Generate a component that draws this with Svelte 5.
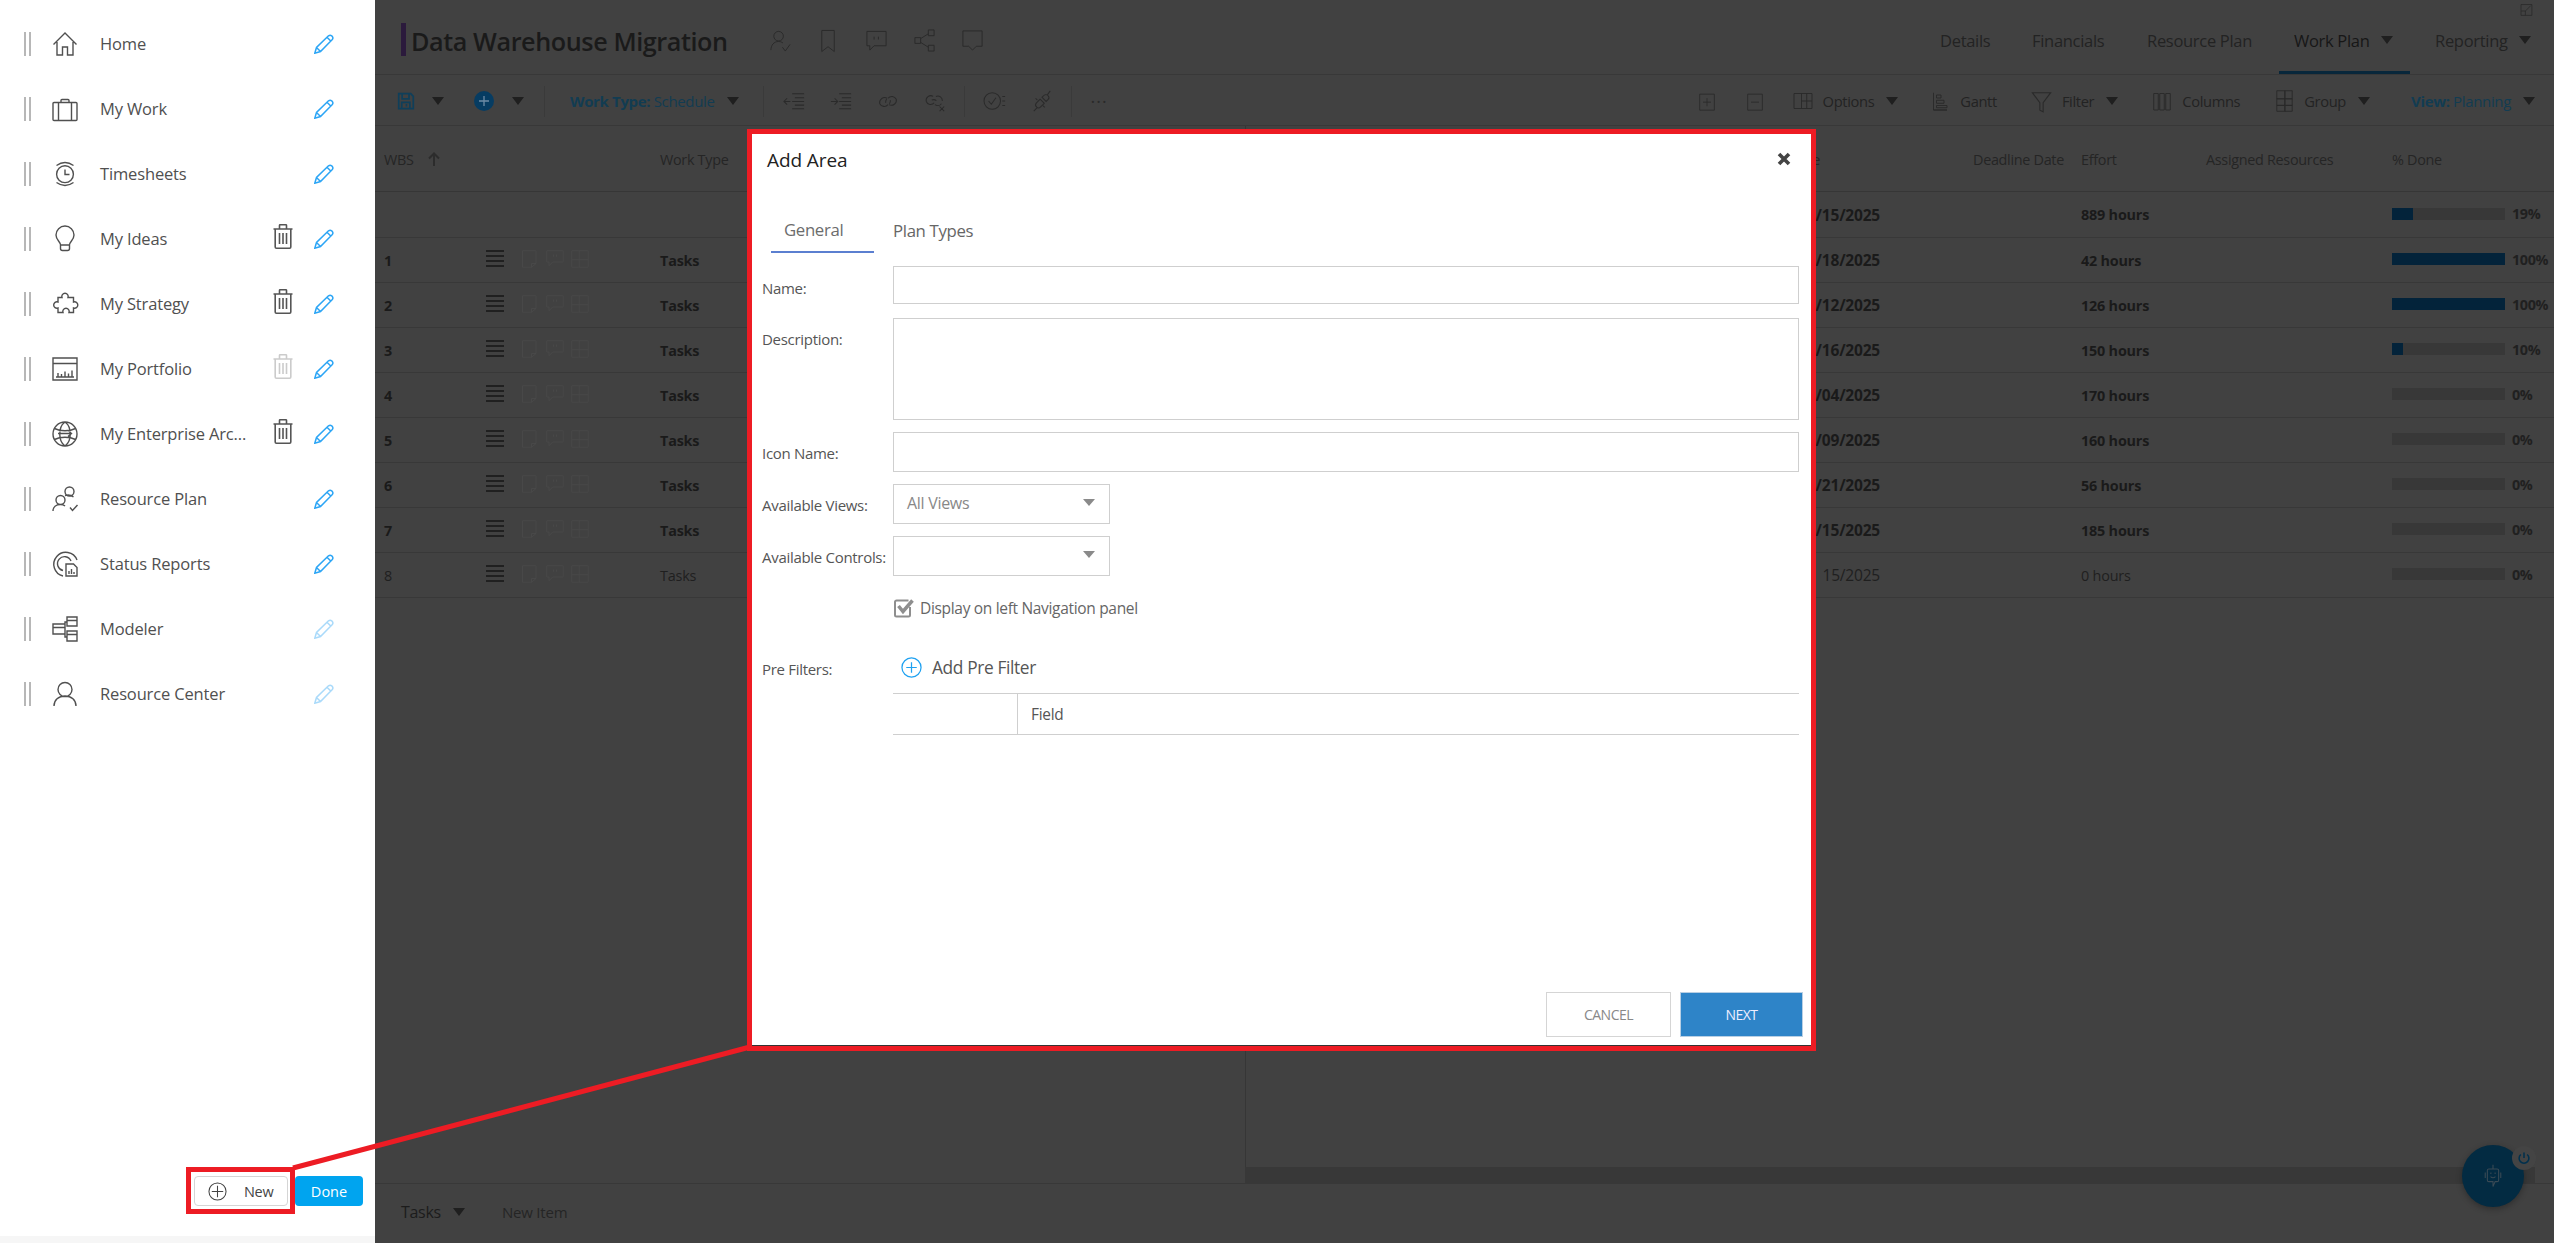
<script>
  const nav = [
    { label: 'Home', icon: 'home', edit: 1 },
    { label: 'My Work', icon: 'work', edit: 1 },
    { label: 'Timesheets', icon: 'time', edit: 1 },
    { label: 'My Ideas', icon: 'bulb', trash: 1, edit: 1 },
    { label: 'My Strategy', icon: 'puzzle', trash: 1, edit: 1 },
    { label: 'My Portfolio', icon: 'portfolio', trash: 0.3, edit: 1 },
    { label: 'My Enterprise Arc...', icon: 'globe', trash: 1, edit: 1 },
    { label: 'Resource Plan', icon: 'people', edit: 1 },
    { label: 'Status Reports', icon: 'status', edit: 1 },
    { label: 'Modeler', icon: 'modeler', edit: 0.4 },
    { label: 'Resource Center', icon: 'person', edit: 0.4 }
  ];
  const I = {
    home: 'M1.5 13.5 13 2l11.5 11.5M5 11v13h5.5v-8h5v8H21V11',
    work: 'M2 6.5h22a1 1 0 0 1 1 1v16a1 1 0 0 1-1 1H2a1 1 0 0 1-1-1v-16a1 1 0 0 1 1-1zM6.5 6.5v18M19.5 6.5v18M9 6.5V4.5a1 1 0 0 1 1-1h6a1 1 0 0 1 1 1v2',
    time: 'M13 4.8a8.4 8.4 0 1 1 0 16.8 8.4 8.4 0 0 1 0-16.8zM13 8.5v5h4.5M4.5 4.5Q13-1.5 21.5 4.5M4.5 21.5Q13 27.500 21.500 21.500',
    bulb: 'M8.500 19c0-3.500-4.500-5-4.500-10a9 9 0 0 1 18 0c0 5-4.500 6.500-4.500 10zM8.500 19v3.500a2 2 0 0 0 2 2h5a2 2 0 0 0 2-2V19',
    puzzle: 'M10 6.500a3.200 3.200 0 1 1 6 0h5.500V11a3.200 3.200 0 1 1 0 6v4.500H17a3.200 3.200 0 1 0-6 0H6v-4.500a3.200 3.200 0 1 1 0-6V6.500z',
    portfolio: 'M1 2h24v22H1zM1 7.500h24M6 20.500v-3.500M9.500 20.500v-2.500M13 20.500v-5M16.500 20.500v-3M20 20.500v-6M4 21h18',
    globe: 'M13 1a12 12 0 1 1 0 24 12 12 0 0 1 0-24zM13 1c-7 5-7 19 0 24M13 1c7 5 7 19 0 24M2.500 7.500c6 3 15 3 21 0M2.500 18.500c6-3 15-3 21 0M6 12.500h13M16 9.500l3.500 3-3.500 3',
    people: 'M17.500 1a4.500 4.500 0 1 1 0 9 4.500 4.500 0 0 1 0-9zM8.500 9.500a4.500 4.500 0 1 1 0 9 4.500 4.500 0 0 1 0-9zM1 25c0-4 3-6.500 7.500-6.500 2 0 3.500.5 4.500 1.500M13 9.500c3-1 6-.5 8.500 1.500M18 21.500l2.500 3 5-5.500',
    status: 'M11 25A12 12 0 1 1 25 9M11 19.500A7 7 0 1 1 19 10M14 13h7.500l3.500 3.500V25H14zM17 23v-3M19.500 23v-5M22 23v-2',
    modeler: 'M15 1h10v9H15zM15 4.500h10M15 15h10v10H15zM15 18.500h10M1 8h12v10H1zM1 11.500h12M15 6h-2v2M13 18v3h2',
    person: 'M13 1.500a7 7 0 1 1 0 14 7 7 0 0 1 0-14zM2 25c0-6 4.500-10 11-10s11 4 11 10',
    save: 'M2 2h14l3 3v14.500H2zM6 2v6h8V2M5.500 19.500V12h9.500v7.500M11 14v3',
    userck: 'M10 2.500a5 5 0 1 1 0 10 5 5 0 0 1 0-10zM2 22c0-5 3-9 8-9 2 0 3 .5 4.500 1.500M14 19l3 4 5-7',
    mark: 'M5 1.500h13v22l-6.500-5-6.500 5z',
    chat: 'M2 2.500h20v15H9.500L5 22v-4.500H2zM9.500 8v3M14 8v3',
    share: 'M2 9h6v6H2zM16 1h6v6h-6zM16 17h6v6h-6zM8 10l8-5M8 14l8 5',
    note: 'M2 2h20v16h-6l-4 4-4-4H2z',
    outdent: 'M10 4h13M13 8.500h10M10 12.500h13M13 16.500h10M10 20.500h13M8 12.500H1M4.500 9l-3.500 3.500L4.500 16',
    indent: 'M10 4h13M13 8.500h10M10 12.500h13M13 16.500h10M10 20.500h13M1 12.500h7M5 9l3.500 3.500L5 16',
    link: 'M11 9a5.500 5.500 0 0 0-8 6 5.500 5.500 0 0 0 9 1M13 16a5.500 5.500 0 0 0 8-6 5.500 5.500 0 0 0-9-1M9.500 14a5 5 0 0 1 1-4M14.500 11a5 5 0 0 1-1 4',
    unlink: 'M10 7a5 5 0 0 0-7.500 5.500A5 5 0 0 0 11 14M12 16a5 5 0 0 0 7-1M8.500 11a5 5 0 0 1 5 .5M17 18l5 5M22 18l-5 5M13 7a5 5 0 0 1 7 5',
    check: 'M9 3a9 9 0 1 1 0 18 9 9 0 0 1 0-18zM5 12l3 3.500 5-7M20 7h3M20 12h3M20 17h3',
    plug: 'M3 23l4-4M21 1l-3 4M10 10l-4 4a3 3 0 0 0 4.500 4.500l4-4zM14 6l-2 2 4.500 4.500 2-2a3 3 0 0 0-4.500-4.500zM7 11l-2-2M13 17l2 2',
    plusbox: 'M1 1h22v24H1zM6 13h12M12 7v12',
    minusbox: 'M1 1h22v24H1zM6 13h12',
    options: 'M1 2h24v20H1zM11 2v20M18 2v20M11 12h14',
    gantt: 'M2 1v23h18M2 24h18M6 4h6v4H6zM6 11h10v4H6zM6 18h14v3H6z',
    filter: 'M1 2h22L14 14v11l-4-2v-9z',
    cols: 'M1 2h6v22H1zM9 2h6v22H9zM17 2h6v22h-6z',
    group: 'M1 1h11v11H1zM12 1h10v11H12zM1 12h11v9H1zM12 12h10v9H12zM1 21h11v8H1zM12 21h10v8H12z',
    page: 'M2 1h18v17l-6 5H2zM14 23v-5h6',
    panel: 'M1 1h20v20H1zM1 13h8v8M9 13l10-10',
    msg: 'M1 1h22v15H9l-5 5v-5H1zM10 6v3M14 6v3',
    board: 'M1 1h22v22H1zM11 1v22M11 13h12M1 13h10'
  };
  const iconsTop = ['userck', 'mark', 'chat', 'share', 'note'];
  const tabs = [
    { t: 'Details', w: 92 },
    { t: 'Financials', w: 115 },
    { t: 'Resource Plan', w: 147 },
    { t: 'Work Plan', w: 131, caret: 1, active: 1 },
    { t: 'Reporting', w: 115, caret: 1 }
  ];
  const rows = [
    { w: '1', d: '/18/2025', e: '42 hours', p: 100 },
    { w: '2', d: '/12/2025', e: '126 hours', p: 100 },
    { w: '3', d: '/16/2025', e: '150 hours', p: 10 },
    { w: '4', d: '/04/2025', e: '170 hours', p: 0 },
    { w: '5', d: '/09/2025', e: '160 hours', p: 0 },
    { w: '6', d: '/21/2025', e: '56 hours', p: 0 },
    { w: '7', d: '/15/2025', e: '185 hours', p: 0 },
    { w: '8', d: '15/2025', e: '0 hours', p: 0, light: 1 }
  ];
</script>

{#snippet ic(name, cls = '', vb = '0 0 24 24')}
  <svg class="ic {cls}" viewBox={vb}><path d={I[name]} /></svg>
{/snippet}
{#snippet caret(cls = '')}
  <span class="caret {cls}"></span>
{/snippet}
{#snippet pencil()}
  <svg class="pencil" viewBox="0 0 20 20"><path d="M.8 19.200 2.500 13.500 14.500 1.800q1.600-1.300 3.200 0l.6.700q1.200 1.500 0 3L6.500 17.500zM2.500 13.500l4 4M13 3.300l4 4" /></svg>
{/snippet}

<div class="page">
  <aside class="side">
    <nav class="nav">
      {#each nav as n}
        <div class="row">
          <span class="grip"></span>
          {@render ic(n.icon, 'navic', '0 0 26 26')}
          <span class="label">{n.label}</span>
          <span class="trash" style="opacity:{n.trash || 0}">
            <svg viewBox="0 0 20 25"><path d="M.5 5h19M2.200 5v18a1.200 1.200 0 0 0 1.200 1.200h13.200a1.200 1.200 0 0 0 1.200-1.200V5M6.500 5V1.500a.8.800 0 0 1 .8-.8h5.400a.8.800 0 0 1 .8.8V5M6.500 9v11M10 9v11M13.500 9v11" /></svg>
          </span>
          <span class="edit" style="opacity:{n.edit}">{@render pencil()}</span>
        </div>
      {/each}
    </nav>
    <div class="side-actions">
      <button class="btn-new">
        <svg viewBox="0 0 20 20"><circle cx="10" cy="10" r="9" /><path d="M10 4v12M4 10h12" /></svg>
        <span>New</span>
      </button>
      <button class="btn-done">Done</button>
    </div>
    <div class="side-foot"></div>
  </aside>

  <main class="main">
    <header class="head">
      <span class="bar"></span>
      <h1>Data Warehouse Migration</h1>
      <div class="head-icons">
        {#each iconsTop as i}{@render ic(i, 'hic')}{/each}
      </div>
      <nav class="tabs">
        {#each tabs as t}
          <div class="tab" class:active={t.active} style="width:{t.w}px">
            <span>{t.t}</span>{#if t.caret}{@render caret('c-tab')}{/if}
          </div>
        {/each}
      </nav>
      {@render ic('panel', 'corner')}
    </header>

    <div class="tools">
      {@render ic('save', 'save', '0 0 21 21')}
      {@render caret('c1')}
      <svg class="plus" viewBox="0 0 20 20"><circle cx="10" cy="10" r="10" /><path d="M10 5v10M5 10h10" /></svg>
      {@render caret('c2')}
      <span class="sep s1"></span>
      <span class="tblue"><b>Work Type:</b> Schedule</span>
      {@render caret('c3')}
      <span class="sep s2"></span>
      {@render ic('outdent', 'ti i1')}
      {@render ic('indent', 'ti')}
      {@render ic('link', 'ti')}
      {@render ic('unlink', 'ti')}
      <span class="sep s3"></span>
      {@render ic('check', 'ti i5')}
      {@render ic('plug', 'ti')}
      <span class="sep s4"></span>
      <span class="dots">···</span>

      <div class="tools-right">
        {@render ic('plusbox', 'ri')}
        {@render ic('minusbox', 'ri m1')}
        {@render ic('options', 'ri wide m2', '0 0 26 24')}
        <span class="rt t1">Options</span>{@render caret('c4')}
        {@render ic('gantt', 'ri m3')}
        <span class="rt t2">Gantt</span>
        {@render ic('filter', 'ri m4')}
        <span class="rt t3">Filter</span>{@render caret('c4')}
        {@render ic('cols', 'ri m5')}
        <span class="rt t4">Columns</span>
        {@render ic('group', 'ri tall m6', '0 0 23 30')}
        <span class="rt t5">Group</span>{@render caret('c4')}
        <span class="tblue view"><b>View:</b> Planning</span>
        {@render caret('c5')}
      </div>
    </div>

    <section class="grid-area">
      <div class="tr th">
        <div class="c-wbs">WBS <svg class="arrow" viewBox="0 0 12 14"><path d="M6 14V2M1 6.500 6 1.500l5 5" /></svg></div>
        <div></div><div></div>
        <div>Work Type</div>
        <div class="c-date head-date">Date</div>
        <div class="c-dead">Deadline Date</div>
        <div>Effort</div>
        <div>Assigned Resources</div>
        <div>% Done</div>
      </div>
      <div class="tr summary sumrow">
        <div></div><div></div><div></div><div></div>
        <div class="c-date">/15/2025</div>
        <div></div>
        <div>889 hours</div>
        <div></div>
        <div class="prog"><span class="track"><i style="width:19%"></i></span><span class="pct">19%</span></div>
      </div>
      {#each rows as r}
        <div class="tr" class:summary={!r.light}>
          <div>{r.w}</div>
          <div class="drag"><i></i><i></i><i></i><i></i></div>
          <div class="faint">
            {@render ic('page', 'fi')}{@render ic('msg', 'fi')}{@render ic('board', 'fi')}
          </div>
          <div>Tasks</div>
          <div class="c-date">{r.d}</div>
          <div></div>
          <div>{r.e}</div>
          <div></div>
          <div class="prog"><span class="track"><i style="width:{r.p}%"></i></span><span class="pct">{r.p}%</span></div>
        </div>
      {/each}
      <span class="divider"></span>
    </section>

    <div class="scroll"></div>
    <footer class="foot">
      <span class="ft">Tasks</span>{@render caret('c6')}
      <span class="fn">New Item</span>
    </footer>
  </main>

  <div class="bot">
    <svg viewBox="0 0 24 34"><path d="M12 1v6M6 7h12a2 2 0 0 1 2 2v14a2 2 0 0 1-2 2h-3l-3 7v-7H6a2 2 0 0 1-2-2V9a2 2 0 0 1 2-2zM1 12v8M23 12v8M9 12v2M15 12v2M8.500 18q3.500 3 7 0" /></svg>
    <span class="power">
      <svg viewBox="0 0 20 20"><path d="M10 2v8M5.500 5a7 7 0 1 0 9 0" /></svg>
    </span>
  </div>

  <svg class="callout" viewBox="0 0 2554 1243"><line x1="293" y1="1168" x2="750" y2="1047" /></svg>
  <div class="newbox"></div>

  <div class="modal">
    <div class="sheet">
      <div class="m-title">
        <h2>Add Area</h2>
        <svg class="close" viewBox="0 0 14 14"><path d="M2 2l10 10M12 2 2 12" /></svg>
      </div>
      <div class="m-tabs">
        <div class="m-tab on">General</div>
        <div class="m-tab">Plan Types</div>
      </div>
      <form class="form">
        <label class="l l-name" for="f-name">Name:</label>
        <input id="f-name" class="in h38" />
        <label class="l l-desc" for="f-desc">Description:</label>
        <textarea id="f-desc" class="in ta"></textarea>
        <label class="l" for="f-icon">Icon Name:</label>
        <input id="f-icon" class="in h40" />
        <span class="l">Available Views:</span>
        <div class="sel first"><span>All Views</span><i></i></div>
        <span class="l">Available Controls:</span>
        <div class="sel"><span></span><i></i></div>
        <span></span>
        <div class="chk">
          <svg viewBox="0 0 20 20"><path class="box" d="M16 9v8a1.500 1.500 0 0 1-1.500 1.500h-12A1.500 1.500 0 0 1 1 17V4a1.500 1.500 0 0 1 1.500-1.500h12" /><path class="tick" d="M4.500 8 9 13.500 18.500 2.500" /></svg>
          <span>Display on left Navigation panel</span>
        </div>
        <span class="l l-pre">Pre Filters:</span>
        <div class="addpre">
          <svg viewBox="0 0 22 22"><circle cx="11" cy="11" r="10" /><path d="M11 5.500v11M5.500 11h11" /></svg>
          <span>Add Pre Filter</span>
        </div>
        <span></span>
        <div class="pt"><div class="pt-a"></div><div class="pt-b">Field</div></div>
      </form>
      <div class="m-foot">
        <button type="button" class="cancel">CANCEL</button>
        <button type="button" class="next">NEXT</button>
      </div>
    </div>
  </div>
</div>

<style>
  :global(body) { margin: 0; background: #414141; }
  .page {
    position: relative; width: 2554px; height: 1243px; overflow: hidden;
    display: grid; grid-template-columns: 375px 1fr;
    font-family: "Open Sans", "Noto Sans", sans-serif; color: #202020;
  }
  button { font-family: inherit; padding: 0; cursor: pointer; }
  .ic { display: block; width: 24px; height: 24px; fill: none; stroke: #2a2a2a; stroke-width: 1.3; flex: none; overflow: visible; }

  .side { background: #fff; display: flex; flex-direction: column; height: 1243px; }
  .nav { padding-top: 11px; flex: 1; }
  .row { height: 65px; display: flex; align-items: center; padding-left: 24px; color: #555; }
  .grip { height: 24px; border-left: 2px solid #b7b7b7; border-right: 2px solid #b7b7b7; width: 3px; flex: none; }
  .row :global(.navic) { width: 26px; height: 26px; margin-left: 21px; stroke: #505050; stroke-width: 1.4; }
  .label { width: 148px; margin-left: 22px; margin-top: -1px; font-size: 16.500px; letter-spacing: -.15px; white-space: nowrap; color: #505050; }
  .trash { width: 20px; height: 25px; margin-left: 25px; margin-top: -4px; flex: none; }
  .trash svg { width: 20px; height: 25px; display: block; fill: none; stroke: #555; stroke-width: 1.6; }
  .edit { width: 20px; height: 20px; margin-left: 21px; flex: none; }
  .pencil { width: 20px; height: 20px; display: block; fill: none; stroke: #2ca5f5; stroke-width: 1.500; }
  .side-actions { display: flex; justify-content: flex-end; padding-right: 12px; height: 30px; }
  .btn-new { width: 94px; height: 30px; border: 1px solid #d5d5d5; border-radius: 4px; background: #fff; display: flex; align-items: center; color: #444; font-size: 14.500px; margin-right: 7px; }
  .btn-new svg { width: 19px; height: 19px; margin-left: 13px; fill: none; stroke: #444; stroke-width: 1.100; }
  .btn-new span { margin-left: 17px; letter-spacing: -.3px; }
  .btn-done { width: 68px; height: 30px; border: 0; border-radius: 4px; background: #00a4ef; color: #fff; font-size: 14.500px; font-weight: 500; }
  .side-foot { height: 7px; margin-top: 30px; background: #f6f6f6; }

  .main { display: flex; flex-direction: column; height: 1243px; min-width: 0; background: #414141; }
  .head { height: 75px; box-sizing: border-box; border-bottom: 1px solid #383838; display: flex; align-items: center; padding-left: 26px; position: relative; }
  .bar { width: 5px; height: 33px; background: #2b1a3c; margin-top: 5px; flex: none; }
  h1 { margin: 7px 0 0 5px; font-size: 25.200px; line-height: 30px; font-weight: 600; color: #1a1a1a; letter-spacing: -.42px; white-space: nowrap; }
  .head-icons { display: flex; gap: 25px; margin-left: 41px; margin-top: 6px; }
  .head-icons :global(.hic) { stroke: #2a2a2a; stroke-width: 1; width: 23px; height: 23px; }
  .tabs { margin-left: auto; display: flex; height: 74px; margin-right: 19px; }
  .tab { display: flex; align-items: center; font-size: 16.500px; color: #232323; letter-spacing: -.3px; box-sizing: border-box; padding-left: 15px; padding-top: 6px; height: 74px; white-space: nowrap; }
  .tab.active { color: #171717; border-bottom: 3px solid #08273b; margin-right: 10px; padding-top: 9px; }
  .caret { display: block; width: 0; height: 0; border-left: 6px solid transparent; border-right: 6px solid transparent; border-top: 8px solid #1f1f1f; flex: none; }
  .tabs :global(.c-tab) { margin-left: 11px; margin-top: -1px; }
  .head :global(.corner) { position: absolute; right: 20px; top: 4px; width: 14px; height: 13px; stroke-width: 1.500; }

  .tools { height: 51px; box-sizing: border-box; border-bottom: 1px solid #383838; display: flex; align-items: center; padding-left: 22px; padding-top: 2px; }
  .tools :global(.save) { width: 18px; height: 18px; stroke: #0f3f5a; stroke-width: 2; }
  .tools :global(.c1) { margin-left: 17px; }
  .plus { width: 20px; height: 20px; margin-left: 30px; flex: none; }
  .plus circle { fill: #063c62; }
  .plus path { stroke: #6d8ca6; stroke-width: 1.300; }
  .tools :global(.c2) { margin-left: 18px; }
  .sep { width: 1px; height: 31px; background: #3a3a3a; flex: none; }
  .s1 { margin-left: 20px; }
  .tblue { color: #123c52; font-size: 15px; letter-spacing: -.35px; white-space: nowrap; }
  .tblue b { font-weight: 700; }
  .s1 + .tblue { margin-left: 25px; }
  .tools :global(.c3) { margin-left: 12px; }
  .s2 { margin-left: 24px; }
  .tools :global(.ti) { width: 22px; height: 22px; margin-left: 25px; stroke: #2a2a2a; stroke-width: 1.100; }
  .tools :global(.i1) { margin-left: 19px; }
  .s3 { margin-left: 18px; }
  .tools :global(.i5) { margin-left: 19px; }
  .s4 { margin-left: 18px; }
  .dots { margin-left: 19px; font-size: 18px; letter-spacing: 1px; color: #2a2a2a; }
  .tools-right { margin-left: auto; display: flex; align-items: center; padding-right: 19px; }
  .tools-right :global(.ri) { width: 16px; height: 17px; stroke: #2a2a2a; stroke-width: 1.300; }
  .tools-right :global(.m1) { margin-left: 32px; }
  .tools-right :global(.wide) { width: 20px; height: 18px; }
  .tools-right :global(.m2) { margin-left: 30px; }
  .rt { font-size: 14.700px; letter-spacing: -.35px; color: #232323; }
  .t1 { margin-left: 10px; }
  .tools-right :global(.c4) { margin-left: 12px; }
  .tools-right :global(.m3) { margin-left: 34px; width: 18px; height: 20px; }
  .t2 { margin-left: 10px; }
  .tools-right :global(.m4) { margin-left: 34px; width: 21px; height: 20px; }
  .t3 { margin-left: 10px; }
  .tools-right :global(.m5) { margin-left: 35px; width: 18px; height: 18px; }
  .t4 { margin-left: 11px; }
  .tools-right :global(.tall) { width: 19px; height: 22px; }
  .tools-right :global(.m6) { margin-left: 35px; }
  .t5 { margin-left: 10px; }
  .view { margin-left: 41px; }
  .tools-right :global(.c5) { margin-left: 12px; }

  .grid-area { position: relative; flex: 1; min-height: 0; }
  .tr {
    display: grid; grid-template-columns: 111px 34px 140px 1120px 100px 201px 125px 186px 1fr;
    height: 45px; border-bottom: 1px solid #383838; box-sizing: border-box; align-items: center;
    font-size: 14.400px; color: #1f1f1f; white-space: nowrap; letter-spacing: -.2px;
  }
  .tr > div:first-child { padding-left: 9px; }
  .th { height: 66px; color: #252525; font-size: 14.400px; letter-spacing: -.3px; border-bottom-color: #363636; padding-top: 2px; }
  .sumrow { height: 46px; }
  .summary { font-weight: 700; color: #1a1a1a; }
  .arrow { width: 12px; height: 14px; margin-left: 11px; fill: none; stroke: #2c2c2c; stroke-width: 2; vertical-align: -1px; }
  .c-date { text-align: right; font-size: 15.500px; }
  .head-date { padding-right: 60px; font-size: 14.400px; }
  .c-dead { padding-left: 93px; }
  .drag { display: flex; flex-direction: column; gap: 3px; width: 18px; margin-top: -3px; }
  .drag i { display: block; height: 2px; background: #202020; }
  .faint { display: flex; gap: 5px; margin-top: -3px; }
  .grid-area :global(.fi) { width: 20px; height: 18px; stroke: #4a4a4a; stroke-width: 1.100; }
  .prog { display: flex; align-items: center; gap: 7px; font-weight: 700; }
  .track { width: 113px; height: 12px; background: #383838; display: block; flex: none; margin-top: -2px; }
  .track i { display: block; height: 100%; background: #03233a; }
  .pct { font-size: 14.400px; letter-spacing: -.4px; margin-top: -2px; color: #202020; }
  .divider { position: absolute; left: 870px; top: 0; bottom: 0; width: 1px; background: #363636; }

  .scroll { height: 16px; margin-left: 870px; margin-right: 19px; background: #383838; flex: none; }
  .foot { height: 60px; border-top: 1px solid #383838; box-sizing: border-box; display: flex; align-items: center; padding: 0 0 4px 26px; flex: none; }
  .ft { font-size: 16px; color: #1c1c1c; letter-spacing: -.3px; }
  .foot :global(.c6) { margin-left: 12px; }
  .fn { margin-left: 37px; font-size: 15px; color: #252525; letter-spacing: -.2px; }

  .bot { position: absolute; left: 2462px; top: 1145px; width: 62px; height: 62px; border-radius: 50%; background: #032b42; box-shadow: 0 2px 6px rgba(0,0,0,.3); display: flex; align-items: center; justify-content: center; }
  .bot > svg { width: 18px; height: 24px; fill: none; stroke: #3a4a55; stroke-width: 1.500; }
  .power { position: absolute; left: 50px; top: 1px; width: 24px; height: 24px; border-radius: 50%; background: #444; display: flex; align-items: center; justify-content: center; }
  .power svg { width: 14px; height: 14px; fill: none; stroke: #00304d; stroke-width: 2.200; }

  .callout { position: absolute; inset: 0; width: 2554px; height: 1243px; pointer-events: none; }
  .callout line { stroke: #ed1c24; stroke-width: 5; }
  .newbox { position: absolute; left: 186px; top: 1167px; width: 109px; height: 47px; box-sizing: border-box; border: 5px solid #ed1c24; }

  .modal { position: absolute; left: 747px; top: 129px; width: 1069px; height: 922px; box-sizing: border-box; border: 5px solid #ed1c24; background: #333; }
  .sheet { background: #fff; height: 911px; display: flex; flex-direction: column; color: #555; }
  .m-title { height: 52px; display: flex; align-items: center; justify-content: space-between; padding: 0 20px 0 15px; flex: none; }
  h2 { margin: 0; font-size: 19px; font-weight: 400; color: #222; letter-spacing: -.1px; }
  .close { width: 14px; height: 14px; fill: none; stroke: #444; stroke-width: 3.600; margin-top: -2px; }
  .m-tabs { display: flex; height: 67px; margin-left: 19px; flex: none; align-items: flex-end; }
  .m-tab { font-size: 16.800px; color: #666; letter-spacing: -.35px; height: 46px; line-height: 48px; box-sizing: border-box; margin-left: 19px; }
  .m-tab.on { width: 103px; margin-left: 0; padding-left: 13px; border-bottom: 2px solid #5b7fd0; line-height: 46px; color: #6c6c6c; }
  .form { display: grid; grid-template-columns: 141px 906px; row-gap: 12px; margin: 13px 0 0; align-items: center; }
  .l { padding-left: 10px; padding-top: 2px; font-size: 15px; color: #555; letter-spacing: -.3px; white-space: nowrap; }
  .l-name { padding-top: 4px; }
  .l-desc { align-self: start; padding-top: 11px; }
  .in { display: block; box-sizing: border-box; width: 906px; border: 1px solid #cfcfcf; outline: 0; padding: 0; margin: 0; background: #fff; resize: none; font: inherit; }
  .h38 { height: 38px; margin-bottom: 2px; }
  .ta { height: 102px; }
  .h40 { height: 40px; }
  .sel { width: 217px; height: 40px; box-sizing: border-box; border: 1px solid #cfcfcf; display: flex; align-items: center; justify-content: space-between; padding: 0 14px 3px 13px; font-size: 16px; color: #888; letter-spacing: -.3px; }
  .sel i { width: 0; height: 0; border-left: 6.500px solid transparent; border-right: 6.500px solid transparent; border-top: 7px solid #8a8a8a; }
  .chk { display: flex; align-items: center; gap: 6px; height: 18px; margin-top: 11px; font-size: 15.500px; color: #666; letter-spacing: -.32px; padding-left: 1px; white-space: nowrap; }
  .chk svg { width: 20px; height: 20px; flex: none; fill: none; overflow: visible; }
  .chk .box { stroke: #8e8e8e; stroke-width: 2; }
  .chk .tick { stroke: #8e8e8e; stroke-width: 3.500; }
  .addpre { display: flex; align-items: center; gap: 10px; height: 28px; margin-top: 24px; padding-left: 8px; font-size: 17.300px; color: #555; letter-spacing: -.35px; }
  .addpre svg { width: 21px; height: 21px; fill: none; stroke: #1ea1f1; stroke-width: 1.300; flex: none; }
  .l-pre { margin-top: 24px; padding-top: 3px; }
  .pt { display: flex; height: 42px; box-sizing: border-box; border-top: 1px solid #cfcfcf; border-bottom: 1px solid #cfcfcf; width: 906px; }
  .pt-a { width: 124px; border-right: 1px solid #cfcfcf; }
  .pt-b { padding-left: 13px; line-height: 42px; font-size: 15.400px; color: #555; letter-spacing: -.25px; }
  .m-foot { margin-top: auto; display: flex; justify-content: flex-end; gap: 9px; padding: 0 8px 8px 0; }
  .cancel, .next { height: 45px; border-radius: 0; font-size: 14px; letter-spacing: -.5px; font-weight: 400; }
  .cancel { width: 125px; background: #fff; border: 1px solid #d5d5d5; color: #888; }
  .next { width: 123px; background: #2e84c8; border: 1px solid #b8cfe4; color: #eef; }
</style>
